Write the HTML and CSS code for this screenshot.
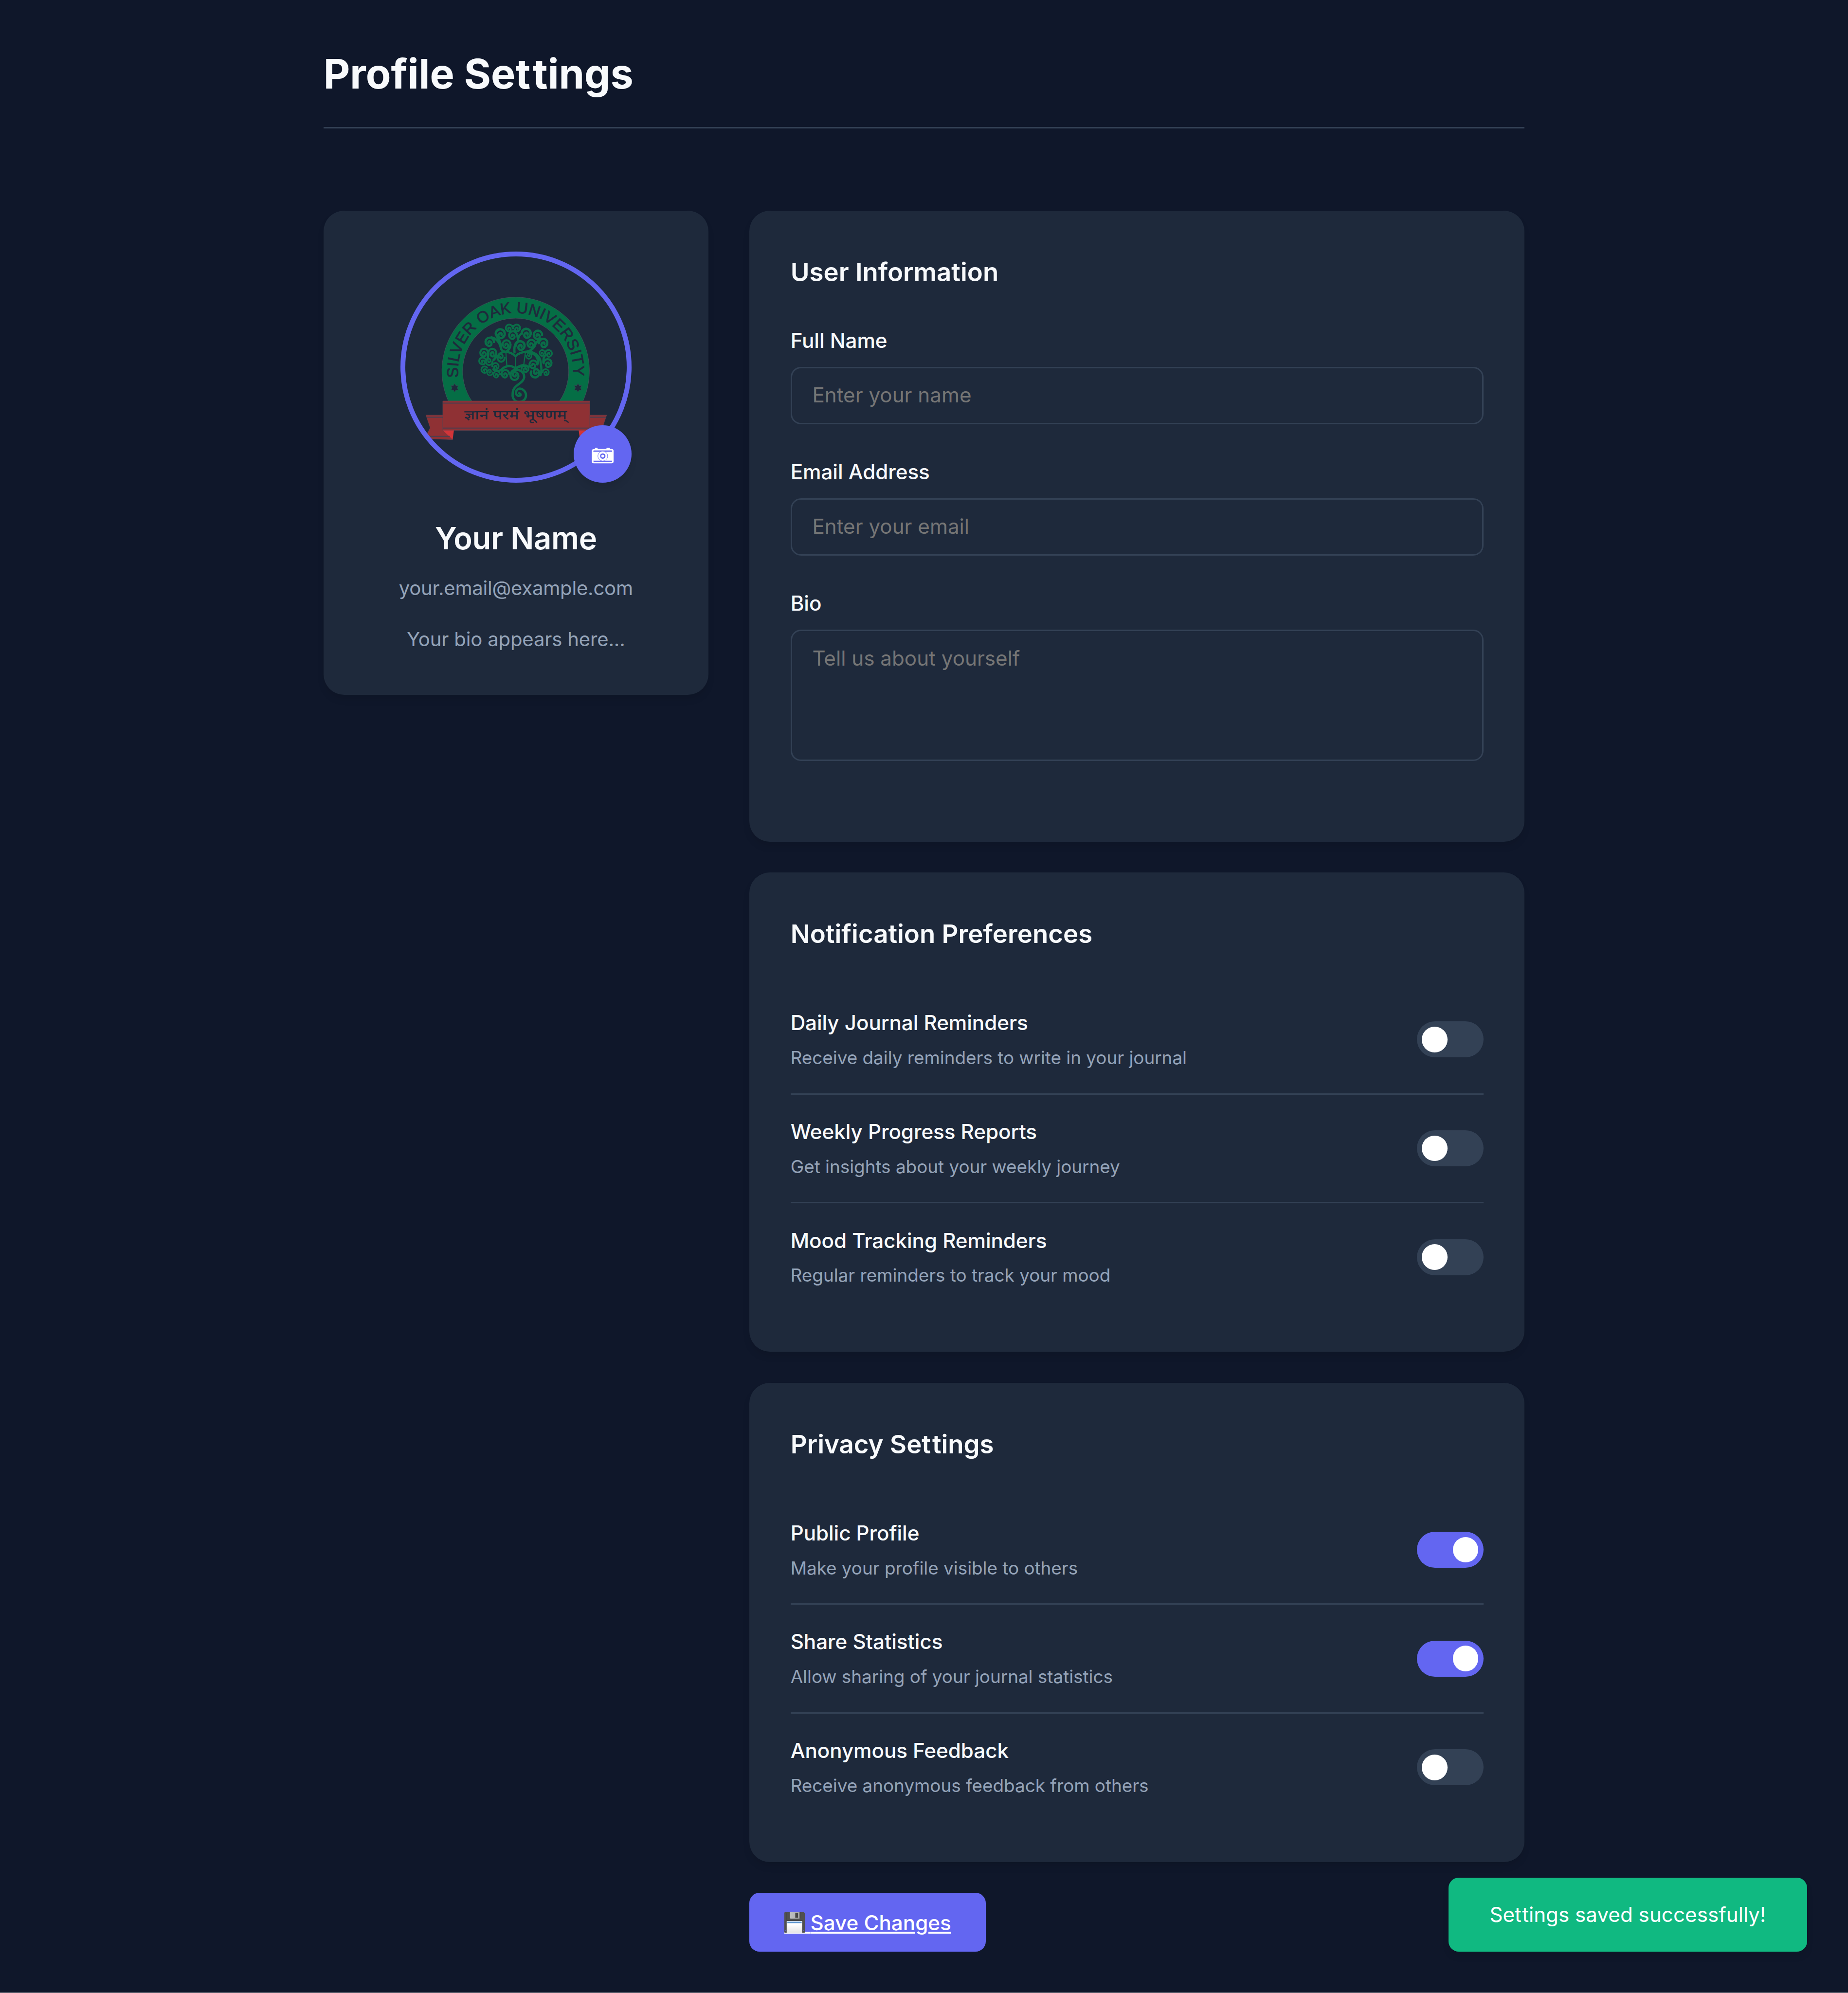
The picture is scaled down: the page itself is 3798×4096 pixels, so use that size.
FILE: index.html
```html
<!DOCTYPE html>
<html lang="en">
<head>
<meta charset="utf-8">
<title>Profile Settings</title>
<link rel="stylesheet" href="styles.css">
</head>
<body>
<div class="container">
  <header class="header"><h1>Profile Se<span class="tt">t</span>tings</h1></header>
  <div class="layout">
    <aside class="card profile">
      <div class="avatar">
        <svg class="avatar-img" viewBox="-132 -216 1620 1620" role="img" aria-label="Silver Oak University">
          <defs>
            <path id="arc" d="M275 668A404 404 0 1 1 1077 668"/>
            <path id="curl" d="M-30 2A30 30 0 1 1 4 30A17 17 0 0 1 4 -4A9 9 0 0 1 9 8"/>
            <path id="star" d="M0-30L9-15.500H26L17.500 0L26 15.500H9L0 30L-9 15.500H-26L-17.500 0L-26-15.500H-9Z"/>
          </defs>
          <path class="ring" d="M204 832A517 517 0 1 1 1148 832H984A372 372 0 1 0 368 832Z"/>
          <text class="motto-en"><textPath href="#arc" textLength="1356">SILVER OAK UNIVERSITY</textPath></text>
          <use class="star" href="#star" x="248" y="740"/>
          <use class="star" href="#star" x="1113" y="740"/>
          <g class="tree">
            <use href="#curl" transform="translate(631 320) scale(-.8 .8)"/>
            <use href="#curl" transform="translate(683 320) scale(.8)"/>
            <use href="#curl" transform="translate(657 370) scale(-.9 .9)"/>
            <use href="#curl" transform="translate(568 360) scale(1.05)"/>
            <use href="#curl" transform="translate(750 357) scale(1.05)"/>
            <use href="#curl" transform="translate(832 368) scale(-.98 .98)"/>
            <use href="#curl" transform="translate(494 417) scale(-.98 .98)"/>
            <use href="#curl" transform="translate(612 433) scale(-.9 .9)"/>
            <use href="#curl" transform="translate(708 443) scale(1.02)"/>
            <use href="#curl" transform="translate(786 430) scale(-.9 .9)"/>
            <use href="#curl" transform="translate(869 425) scale(.98)"/>
            <use href="#curl" transform="translate(455 493) scale(-.9 .9)"/>
            <use href="#curl" transform="translate(512 493) scale(.9)"/>
            <use href="#curl" transform="translate(574 530) rotate(180) scale(.82 .9)"/>
            <use href="#curl" transform="translate(444 551) rotate(-30) scale(-.8 .8)"/>
            <use href="#curl" transform="translate(490 558) rotate(180) scale(.75)"/>
            <use href="#curl" transform="translate(534 588) scale(.75)"/>
            <use href="#curl" transform="translate(458 612) rotate(-40) scale(-.75 .75)"/>
            <use href="#curl" transform="translate(495 632) rotate(180) scale(.65)"/>
            <use href="#curl" transform="translate(543 645) scale(-.75 .75)"/>
            <use href="#curl" transform="translate(604 641) scale(-.88 .88)"/>
            <use href="#curl" transform="translate(668 657) rotate(180) scale(-.92 .92)"/>
            <use href="#curl" transform="translate(742 605) scale(.8)"/>
            <use href="#curl" transform="translate(800 575) scale(-.9 .9)"/>
            <use href="#curl" transform="translate(768 515) rotate(180) scale(-.62 .7)"/>
            <use href="#curl" transform="translate(862 495) scale(-.62 .7)"/>
            <use href="#curl" transform="translate(906 498) scale(.8)"/>
            <use href="#curl" transform="translate(900 566) scale(.92)"/>
            <use href="#curl" transform="translate(887 630) rotate(180) scale(-.72)"/>
            <use href="#curl" transform="translate(812 637) rotate(200) scale(-1 1)"/>
            <path d="M657 306V322M693 400Q684 345 664 342M720 358Q690 375 693 410M668 490C662 440 680 415 700 412M538 362C538 385 575 400 575 470Q560 395 505 386M575 470Q585 485 607 487Q650 492 674 518Q700 490 760 485Q805 470 815 432Q835 400 860 396M640 436Q640 465 612 484M607 487Q560 487 548 528M482 500Q485 535 470 545M540 500Q540 530 520 545M760 485Q840 505 832 570M790 490Q850 510 852 570Q862 620 850 650M870 560Q870 520 885 510M675 606Q720 575 768 592M675 606Q640 570 590 600Q550 640 520 610M640 655Q640 620 675 612Q735 615 736 665C730 715 652 715 655 785A47 47 0 1 0 702 745A30 30 0 0 0 680 785A20 20 0 0 0 710 792Q712 780 700 778"/>
            <path class="book" d="M607 487L614 582Q650 580 674 600Q700 580 733 575L745 487M674 518V600"/>
          </g>
          <path class="ribbon" d="M47 931H165V1038L234 1103L75 1097L52 1068L77 1020ZM1314 931H1196V1038L1127 1103L1286 1097L1309 1068L1284 1020ZM165 832H1196V1038H165Z"/>
          <path class="fold" d="M165 1038H243L234 1103ZM1196 1038H1118L1127 1103Z"/>
          <path class="ribbon-line" d="M165 847H1196M165 1022H1196M52 946H165M1196 946H1309M65 1080H214M1147 1080H1296"/>
          <text class="motto-hi" x="315" y="960" textLength="720" lengthAdjust="spacingAndGlyphs">ज्ञानं परमं भूषणम्</text>
        </svg>
        <button class="avatar-edit" aria-label="Change photo">
          <svg viewBox="63 39 405 405">
            <path fill="#fff" d="M212 206V201Q212 198 215 198H228Q231 198 231 201V205H293V201Q293 198 296 198H314Q317 198 317 201V205H329Q343 205 343 219V292Q343 306 329 306H204Q190 306 190 292V219Q190 207 204 205Z"/>
            <path fill="#6366f1" d="M204 216H330L333 219V225H201V219ZM201 287H333V292L330 295H204L201 292Z"/>
            <circle cx="267" cy="255" r="34.500" fill="#fff" stroke="#6366f1" stroke-width="3"/>
            <circle cx="267" cy="255" r="14.500" fill="none" stroke="#6366f1" stroke-width="9.500"/>
          </svg>
        </button>
      </div>
      <h2 class="name">Your Name</h2>
      <p class="email">your.email@example.com</p>
      <p class="bio">Your bio appears here...</p>
    </aside>
    <main class="sections">
      <section class="card">
        <h3>User Information</h3>
        <div class="field"><label for="n">Full Name</label><input id="n" type="text" placeholder="Enter your name"></div>
        <div class="field"><label for="e">Email Address</label><input id="e" type="email" placeholder="Enter your email"></div>
        <div class="field field-area"><label for="b">Bio</label><textarea id="b" placeholder="Tell us about yourself"></textarea></div>
      </section>
      <section class="card">
        <h3>Notification Preferences</h3>
        <div class="row"><div><h4>Daily Journal Reminders</h4><p>Receive daily reminders to write in your journal</p></div><span class="toggle"></span></div>
        <div class="row"><div><h4>Weekly Progress Reports</h4><p>Get insights about your weekly journey</p></div><span class="toggle"></span></div>
        <div class="row"><div><h4>Mood Tracking Reminders</h4><p>Regular reminders to track your mood</p></div><span class="toggle"></span></div>
      </section>
      <section class="card">
        <h3>Privacy Se<span class="tt">t</span>tings</h3>
        <div class="row"><div><h4>Public Profile</h4><p>Make your profile visible to others</p></div><span class="toggle on"></span></div>
        <div class="row"><div><h4>Share Statistics</h4><p>Allow sharing of your journal statistics</p></div><span class="toggle on"></span></div>
        <div class="row"><div><h4>Anonymous Feedback</h4><p>Receive anonymous feedback from others</p></div><span class="toggle"></span></div>
      </section>
      <a class="save" href="#"><span class="disk">&nbsp;<svg viewBox="0 0 48 48">
        <defs><linearGradient id="paper" x2="0" y2="1"><stop offset=".3" stop-color="#fff"/><stop offset="1" stop-color="#e4e4e4"/></linearGradient><linearGradient id="metal"><stop stop-color="#bfc0c2"/><stop offset="1" stop-color="#a9aaac"/></linearGradient></defs>
        <path fill="#505050" d="M1 0H46L48 3V46Q48 48 46 48H2Q0 48 0 46V1Z"/>
        <path fill="#3f3f3f" d="M3.500 1H5V19H3.500ZM36 0H37.500V14H36ZM5 19H43V48H42V20H5Z"/>
        <path fill="url(#metal)" d="M13 0H35.500V15H14.500L13 13.500Z"/><path fill="#474747" d="M25.500 1.500H32V13H25.500Z"/>
        <path fill="url(#paper)" d="M5.500 20.500H42V48H5.500Z"/><path fill="#5f97cf" d="M7 22H40.500V25.500H7Z"/>
        <circle cx="2.700" cy="43.500" r="1" fill="#6366f1"/><circle cx="45" cy="43.500" r="1" fill="#6366f1"/>
      </svg></span>Save Changes</a>
    </main>
  </div>
</div>
<div class="toast">Se<span class="tt">t</span>tings saved successfully!</div>
</body>
</html>
```
FILE: styles.css
```css
/* 1rem = 16 design units; every length below is in rem */
html { font-size: 42.2px; background: #9a9da6; }
* { box-sizing: border-box; margin: 0; padding: 0; }
body {
  position: relative;
  height: 4095px;
  overflow: hidden;
  background: #0f172a;
  color: #f8fafc;
  font-family: Inter, sans-serif;
  line-height: 1.6;
}
.container { width: 62.5rem; margin: 0 auto; padding: 2rem; }
.header {
  height: 4.2625rem;
  margin-bottom: 4rem;
  border-bottom: 3px solid #334155;
}
h1 { font-size: 2rem; font-weight: 700; }
/* keeps the crossbars of a double t apart */
.tt { letter-spacing: .055em; }
.layout {
  display: grid;
  grid-template-columns: 18.75rem 37.75rem;
  gap: 2rem;
  align-items: start;
}
.card {
  padding: 2rem;
  border-radius: 1rem;
  background: #1e293b;
  box-shadow: 0 .25rem .375rem -.0625rem rgba(0, 0, 0, .1);
}

/* profile */
.profile { height: 23.575rem; text-align: center; }
.avatar { position: relative; width: 11.25rem; height: 11.25rem; margin: 0 auto 1.5rem; }
.avatar-img {
  display: block;
  width: 100%;
  height: 100%;
  border-radius: 50%;
}
.avatar::after {
  content: "";
  position: absolute;
  inset: 0;
  border: .25rem solid #6366f1;
  border-radius: 50%;
}
.ring { fill: #056e45; stroke: #40565a; stroke-width: 3; }
.motto-en {
  font: 110px "Liberation Sans", Arial, sans-serif;
  fill: #1e293b;
  stroke: #1e2f3d;
  stroke-width: 3.5;
}
.star { fill: #1e293b; stroke: #2f4f52; stroke-width: 3; }
.tree { fill: none; stroke: #0a6e48; stroke-width: 16; stroke-linecap: round; stroke-linejoin: round; }
.tree .book { stroke-width: 8; }
.ribbon { fill: #8f3134; stroke: #67404b; stroke-width: 3; }
.fold { fill: #d23539; }
.ribbon-line { fill: none; stroke: #483f50; stroke-width: 7; }
.motto-hi { font: 500 92px "Noto Sans Devanagari", "Noto Sans", sans-serif; fill: #1e293b; }
.avatar-edit {
  position: absolute;
  right: 0;
  bottom: 0;
  z-index: 1;
  width: 2.8125rem;
  height: 2.8125rem;
  border: 0;
  border-radius: 50%;
  background: #6366f1;
  box-shadow: 0 .25rem .375rem -.0625rem rgba(0, 0, 0, .1);
}
.avatar-edit svg { display: block; width: 100%; height: 100%; }
.name { font-size: 1.5rem; font-weight: 600; margin-bottom: .47rem; letter-spacing: -.005em; }
.email, .bio { font-size: .95rem; color: #94a3b8; letter-spacing: -.004em; }
.email { margin-bottom: .97rem; letter-spacing: -.0055em; }

/* form */
.sections { display: flex; flex-direction: column; gap: 1.5rem; align-items: stretch; }
h3 { font-size: 1.25rem; font-weight: 600; margin-bottom: 1.5rem; }
.field { margin-bottom: 1.5rem; }
.field-area { margin-bottom: 1.94rem; }
label { display: block; margin-bottom: .49rem; padding-top: .01rem; font-weight: 500; letter-spacing: -.0015em; }
input, textarea {
  display: block;
  width: 100%;
  height: 2.8rem;
  padding: .71rem .99rem .77rem;
  border: 3px solid #334155;
  border-radius: .5rem;
  background: transparent;
  color: inherit;
  font: 1rem Inter, sans-serif;
  resize: none;
}
textarea { height: 6.39rem; }
::placeholder { color: #757575; opacity: 1; }

/* preference rows */
.row {
  display: flex;
  justify-content: space-between;
  align-items: center;
  padding: 1rem 0;
  border-bottom: 3px solid #334155;
}
.row:last-child { border-bottom: 0; }
h3 + .row { margin-top: 1.52rem; }
h4 { font-size: 1rem; font-weight: 500; margin-bottom: .2rem; letter-spacing: -.0015em; }
.row p { font-size: .875rem; line-height: 1.43rem; color: #94a3b8; letter-spacing: -.001em; }
.toggle {
  display: flex;
  width: 3.25rem;
  height: 1.75rem;
  padding: .25rem;
  border-radius: 1.75rem;
  background: #334155;
}
.toggle::before { content: ""; width: 1.25rem; height: 1.25rem; border-radius: 50%; background: #fff; }
.toggle.on { justify-content: flex-end; background: #6366f1; }

.save {
  align-self: flex-start;
  width: 11.5rem;
  padding: .66rem 0 .59rem 1.7rem;
  border-radius: .5rem;
  background: #6366f1;
  color: #fff;
  font-weight: 500;
  white-space: nowrap;
}
.disk { position: relative; letter-spacing: 1rem; }
.disk svg { position: absolute; left: 0; top: .08rem; width: 1rem; height: 1rem; }
.toast {
  position: absolute;
  right: 2rem;
  bottom: 2rem;
  padding: 1rem 2rem;
  border-radius: .5rem;
  background: #10b981;
  color: #fff;
  box-shadow: 0 .25rem .375rem -.0625rem rgba(0, 0, 0, .1);
}
.toast .tt { letter-spacing: .03em; }
```
